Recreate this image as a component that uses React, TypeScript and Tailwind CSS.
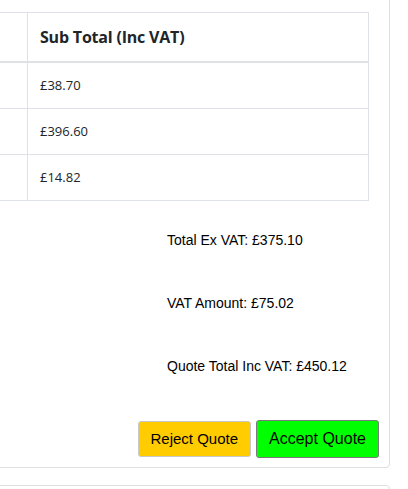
const rows = ["£38.70", "£396.60", "£14.82"];

export default function App() {
  return (
    <div className="relative h-[489px] w-[408px] overflow-hidden bg-white">
      <div className="-mt-[8px] -ml-[40px] w-[430px] rounded-[4px] border border-[#dfdfdf] pt-[19px]">
        <div className="pl-[20px] pr-[20px]">
          <table
            className="w-full table-fixed border-collapse text-[#212529]"
            style={{ fontFamily: '"Open Sans", sans-serif' }}
          >
            <colgroup>
              <col className="w-[46px]" />
              <col />
            </colgroup>
            <thead>
              <tr>
                <th className="border border-b-2 border-[#dee2e6] px-3 py-3 text-left text-[16px] font-bold leading-6"></th>
                <th className="border border-b-2 border-[#dee2e6] px-3 py-3 text-left text-[16px] leading-6 font-bold tracking-[-0.2px]">
                  Sub Total (Inc VAT)
                </th>
              </tr>
            </thead>
            <tbody>
              {rows.map((r) => (
                <tr key={r}>
                  <td className="border border-[#dee2e6] px-3 py-3 text-[14px] leading-[21px]"></td>
                  <td className="border border-[#dee2e6] px-3 py-3 text-[13px] leading-[21px]">{r}</td>
                </tr>
              ))}
            </tbody>
          </table>
        </div>
        <div
          className="pr-[10px] pb-[9px] text-black"
          style={{ fontFamily: '"Liberation Sans", Arial, sans-serif' }}
        >
          <div className="flex flex-col gap-[47px] pt-[31px] pl-[206px] text-[14px] leading-4">
            <p>Total Ex VAT: £375.10</p>
            <p>VAT Amount: £75.02</p>
            <p>Quote Total Inc VAT: £450.12</p>
          </div>
          <div className="mt-[46px] flex items-center justify-end gap-[5px]">
            <button className="h-[36px] rounded-[3px] border border-[#c8c8c8] bg-[#ffcc00] px-[12px] text-[15px] text-black">
              Reject Quote
            </button>
            <button className="h-[38px] rounded-[3px] border border-[#7a7a7a] bg-[#00ff00] px-[12px] text-[16px] text-black">
              Accept Quote
            </button>
          </div>
        </div>
      </div>
      <div className="mt-[17px] -ml-[40px] h-[40px] w-[430px] rounded-[4px] border border-[#dfdfdf]"></div>
    </div>
  );
}
